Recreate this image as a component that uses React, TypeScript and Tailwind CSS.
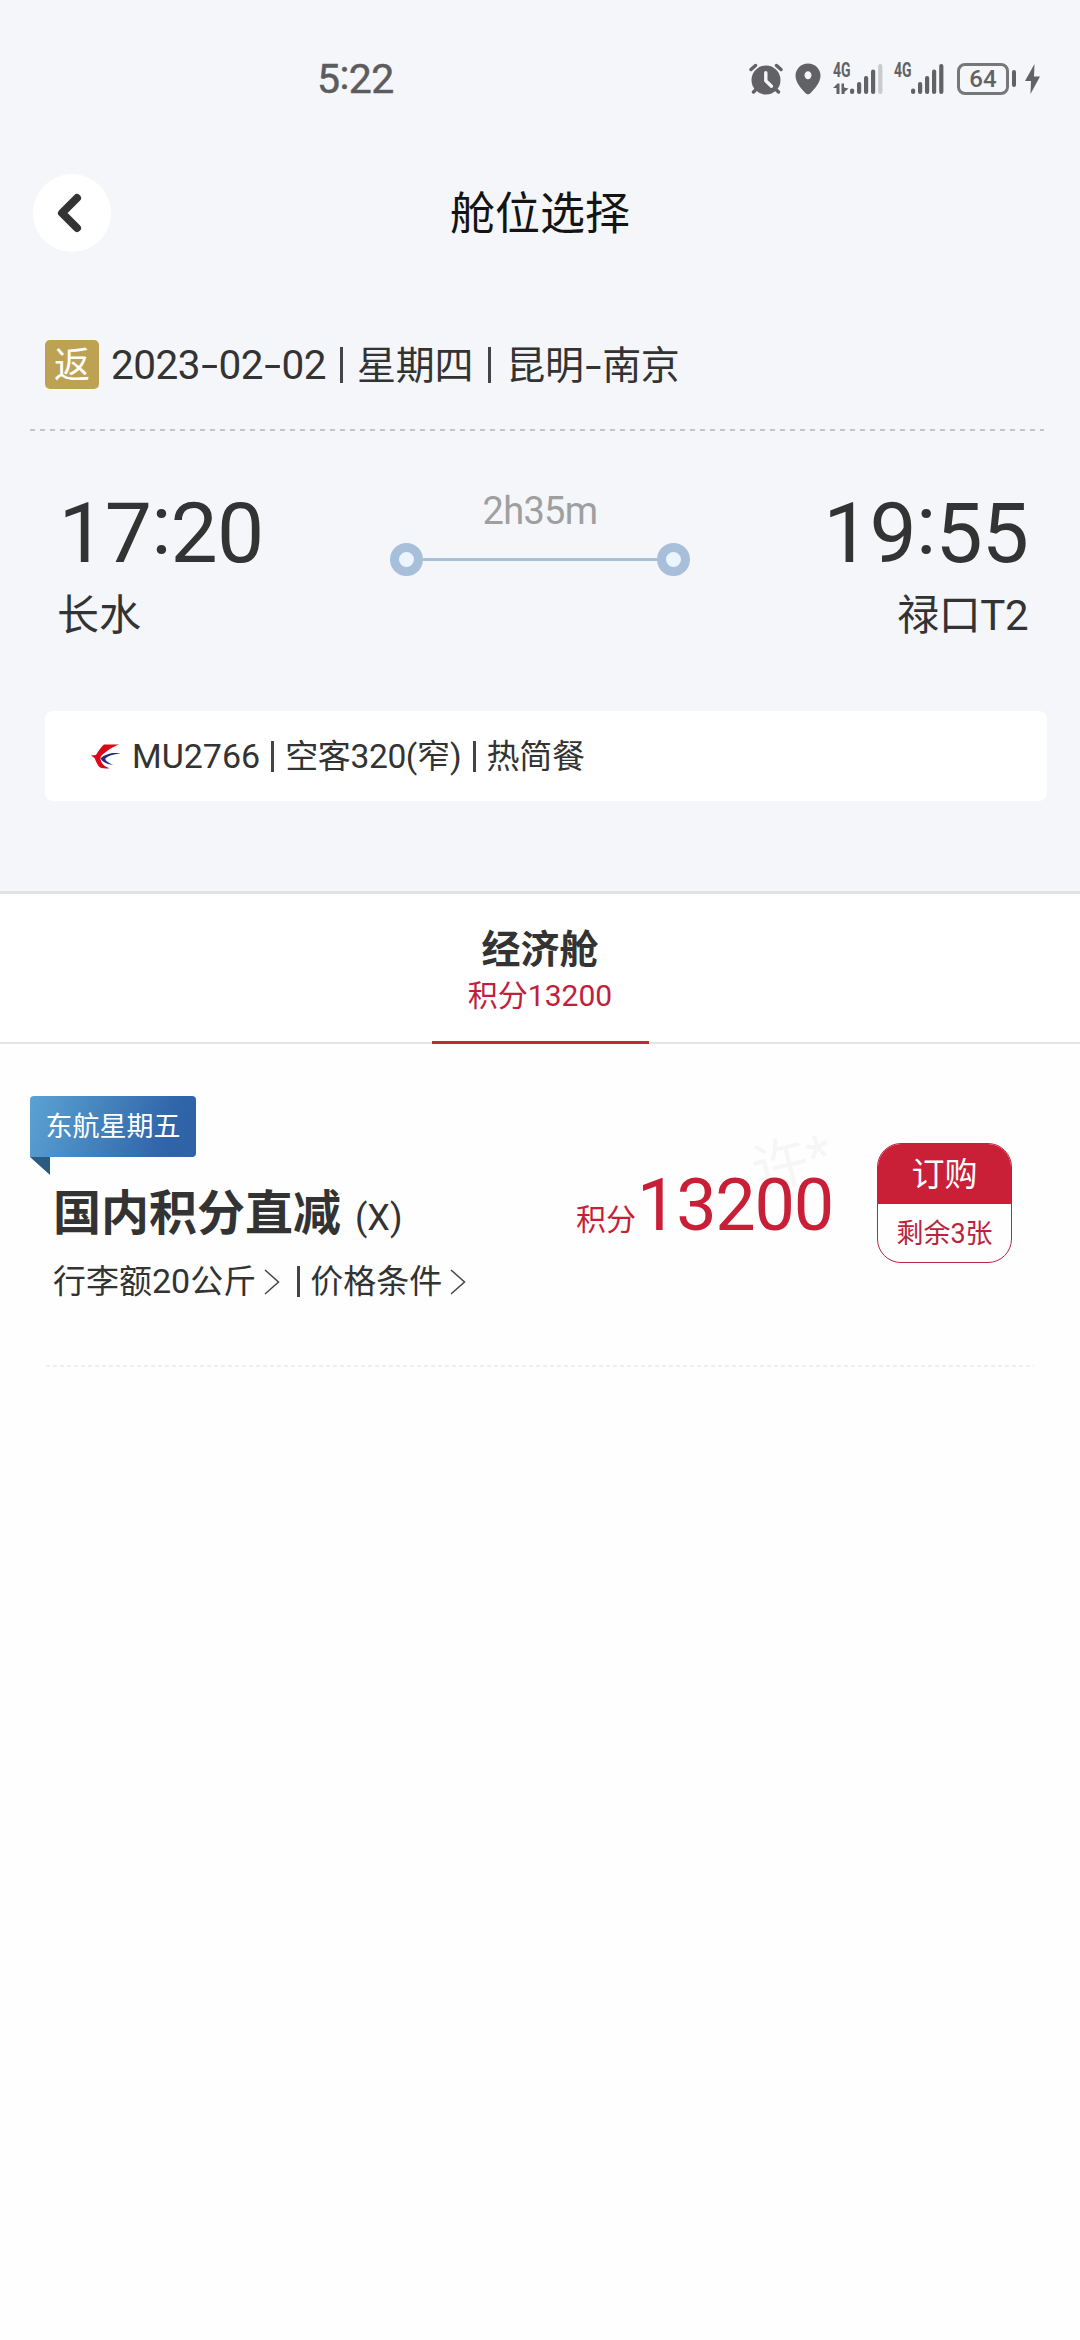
import React from "react";

function AlarmIcon() {
  return (
    <svg className="h-[32px] w-[34px]" viewBox="0 0 34 32" fill="#626265">
      <circle cx="17" cy="17" r="14.5" />
      <path d="M2 6.5 L6.5 2.5 M32 6.5 L27.5 2.5" stroke="#626265" strokeWidth="3.4" strokeLinecap="round" />
      <path d="M7.5 26 L4.5 29 M26.5 26 L29.5 29" stroke="#626265" strokeWidth="3.4" strokeLinecap="round" />
      <path d="M16.8 9.8 V17.8 L22.5 23.2" fill="none" stroke="#f4f6fa" strokeWidth="3.4" strokeLinecap="round" strokeLinejoin="round" />
    </svg>
  );
}

function PinIcon() {
  return (
    <svg className="h-[32px] w-[26px]" viewBox="0 0 26 32" fill="#626265" fillRule="evenodd">
      <path d="M13 .5C6 .5.5 6 .5 12.8c0 7 6 13.2 10.4 17.8q2.1 1.6 4.2 0C19.5 26 25.5 19.8 25.5 12.8 25.5 6 20 .5 13 .5ZM13 8.300c2 0 3.500 1.700 3.500 4s-1.500 4-3.500 4-3.500-1.700-3.500-4 1.500-4 3.500-4Z" />
    </svg>
  );
}

function Signal({ weak }: { weak?: boolean }) {
  return (
    <svg className="h-[38px] w-[51px]" viewBox="0 -3 51 38" fill="#626265">
      <text x="0" y="13.6" fontFamily="Roboto" fontSize="19.5" fontWeight="700" textLength="17.5" lengthAdjust="spacingAndGlyphs">4G</text>
      {weak && (
        <path d="M0 25 4.500 20.500H6.500V31H3.500V25ZM8.500 20.500H11V24.500L15.500 25.500 11.500 29V31H8.500Z" />
      )}
      <rect x="17" y="25.500" width="4.200" height="5.500" rx="2" />
      <rect x="24" y="19" width="4.200" height="12" rx="2" />
      <rect x="31" y="13" width="4.200" height="18" rx="2" />
      <rect x="38" y="6.500" width="4.200" height="24.500" rx="2" />
      <rect x="45.200" y="1" width="4.200" height="30" rx="2" fill={weak ? "#c9cacd" : "#626265"} />
    </svg>
  );
}

function StatusBar() {
  return (
    <div className="flex h-[157px] items-center pl-[317px]">
      <div className="w-[432px] pt-[2px] text-[41px] leading-[41px] tracking-[-0.6px] text-[#5c5c5f] [-webkit-text-stroke:0.5px_#5c5c5f]">
        5<span className="inline-block -translate-y-[4px]">:</span>22
      </div>
      <div className="flex items-center">
        <AlarmIcon />
        <div className="ml-[12px]"><PinIcon /></div>
        <div className="ml-[12px]"><Signal weak /></div>
        <div className="ml-[10px]"><Signal /></div>
        <div className="ml-[12px] flex h-[32px] w-[52px] items-center justify-center rounded-[8px] border-[3px] border-[#77777a] text-[24px] leading-[26px] font-medium text-[#626265]">
          64
        </div>
        <div className="ml-[3px] h-[17px] w-[4px] rounded-full bg-[#626265]" />
        <svg className="ml-[9px] h-[30px] w-[15px]" viewBox="0 0 15 30" fill="#626265">
          <path d="M9.500 0 0 17H6L5.500 30 15 12.500H9Z" />
        </svg>
      </div>
    </div>
  );
}

function TitleBar() {
  return (
    <div className="grid grid-cols-[1fr_auto_1fr] items-center pt-[17px] pl-[33px] pr-[33px]">
      <div className="flex size-[78px] items-center justify-center rounded-full bg-white pr-[6px]">
        <svg className="h-[40px] w-[26px]" viewBox="0 0 26 40" fill="none" stroke="#333" strokeWidth="8" strokeLinecap="round" strokeLinejoin="round">
          <path d="M21 5 6 20 21 35" />
        </svg>
      </div>
      <h1 className="text-[45px] leading-[45px] text-[#141414] pt-[2px]">舱位选择</h1>
    </div>
  );
}

function Hyphen() {
  return <span className="inline-block w-[18.500px] scale-x-[1.500] text-center">-</span>;
}

function Bar({ className }: { className: string }) {
  return <span className={`inline-block w-[3px] bg-[#444] ${className}`} />;
}

function DateRow() {
  return (
    <div className="mt-[88px] flex h-[49px] items-center pl-[45px]">
      <div className="flex h-[49px] w-[54px] items-center justify-center rounded-[5px] bg-[#bda254] text-[36px] leading-[36px] text-white pt-[3px]">返</div>
      <div className="ml-[12px] flex items-baseline pb-[1px] text-[39px] leading-[40px] whitespace-nowrap">
        <span className="text-[40.500px] tracking-[-0.500px]">2023<Hyphen />02<Hyphen />02</span>
        <Bar className="ml-[14px] h-[36px] translate-y-[4px]" />
        <span className="ml-[14px] tracking-[-0.300px]">星期四</span>
        <Bar className="ml-[15px] h-[36px] translate-y-[4px]" />
        <span className="ml-[15px] tracking-[-0.300px]">昆明</span>
        <Hyphen />
        <span className="tracking-[-0.300px]">南京</span>
      </div>
    </div>
  );
}

function Clock({ h, m }: { h: string; m: string }) {
  return (
    <div className="text-[84px] leading-[84px] tracking-[-0.900px]">
      {h}<span className="inline-block -translate-y-[8px]">:</span>{m}
    </div>
  );
}

function Stop() {
  return <span className="size-[33px] rounded-full border-[9px] border-[#a8bfda] bg-[#eaf5ff]" />;
}

function Route() {
  return (
    <div className="flex justify-between pt-[61px] pr-[52px] pl-[57px]">
      <div className="w-[333px]">
        <div className="pl-[1.500px]"><Clock h="17" m="20" /></div>
        <div className="mt-[19px] text-[42px] leading-[42px]">长水</div>
      </div>
      <div className="w-[300px]">
        <div className="text-center text-[38px] leading-[38px] tracking-[-0.700px] text-[#9f9f9f]">2h35m</div>
        <div className="mt-[13px] flex items-center">
          <Stop />
          <span className="h-[3px] flex-1 bg-[#a8c0d6]" />
          <Stop />
        </div>
      </div>
      <div className="flex w-[338px] flex-col items-end">
        <Clock h="19" m="55" />
        <div className="mt-[19px] text-[42px] leading-[42px] tracking-[-0.500px]">禄口T2</div>
      </div>
    </div>
  );
}

function AirlineLogo() {
  return (
    <svg className="h-[25px] w-[30px]" viewBox="0 0 30 25">
      <path d="M0 11.500 5 11C8 6 10.500 2.500 13 .5H28C24 1.800 20 4 15.500 7.500 11 10.500 9 12.500 9.500 15.500 10.500 19.500 13 22.500 18.500 24.200 14 24.800 9.500 24.500 7.500 22 5.500 19 4.500 16 3.500 14Z" fill="#dc0617" />
      <path d="M29.500 9.500C22 8.200 14 10 9.500 14.500 11.500 18 16 20.500 22.500 20.800 17.500 19 14.500 17 14.200 14.800 17 11.800 22 10.300 29.500 9.500Z" fill="#252779" />
    </svg>
  );
}

function FlightInfo() {
  return (
    <div className="mt-[74px] mr-[33px] ml-[45px] flex h-[90px] items-center rounded-[8px] bg-white pl-[46px]">
      <AirlineLogo />
      <div className="ml-[11px] flex items-baseline pb-[1px] text-[33px] leading-[34px] whitespace-nowrap">
        <span className="text-[34px]">MU2766</span>
        <Bar className="ml-[11px] h-[31px] translate-y-[4px]" />
        <span className="ml-[11px] tracking-[-0.300px]">空客</span>
        <span className="text-[33.500px] tracking-[-0.400px]">320(</span>
        <span>窄</span>
        <span className="text-[33.500px]">)</span>
        <Bar className="ml-[11px] h-[31px] translate-y-[4px]" />
        <span className="ml-[11px] tracking-[-0.300px]">热简餐</span>
      </div>
    </div>
  );
}

function CabinTab() {
  return (
    <div className="flex h-[153px] flex-col items-center border-t-[3px] border-[#e2e2e2] bg-white">
      <div className="mt-[37px] text-[39px] leading-[39px] font-bold">经济舱</div>
      <div className="mt-[11px] text-[30px] leading-[30px] text-[#c1203c]">积分13200</div>
      <div className="mt-auto flex w-full items-end">
        <span className="h-[2px] flex-1 bg-[#e4e4e4]" />
        <span className="h-[3px] w-[217px] bg-[#c32a35]" />
        <span className="h-[2px] flex-1 bg-[#e4e4e4]" />
      </div>
    </div>
  );
}

function Chevron() {
  return (
    <svg className="h-[26px] w-[16px]" viewBox="0 0 16 26" fill="none" stroke="#444" strokeWidth="1.500">
      <path d="M1 1 14.500 13 1 25" />
    </svg>
  );
}

function FareCard() {
  return (
    <div className="flex h-[320px] pt-[52px]">
      <div className="w-[530px] pl-[30px]">
        <div className="flex h-[61px] w-[166px] items-center justify-center rounded-[4px] rounded-bl-none bg-linear-[110deg,#5ba3d3_0%,#3065a9_80%,#2f61a5_100%] pt-[2px] text-[27px] leading-[27px] whitespace-nowrap text-white">
          东航星期五
        </div>
        <svg className="block h-[18px] w-[20px]" viewBox="0 0 20 18">
          <path d="M0 0H20V18Z" fill="#2a5b81" />
        </svg>
        <div className="mt-[15px] flex items-baseline pl-[23px] leading-[48px] whitespace-nowrap">
          <span className="text-[48px] font-bold">国内积分直减</span>
          <span className="ml-[14px] text-[36px]">(X)</span>
        </div>
        <div className="mt-[22px] flex items-center pl-[23px] text-[33px] leading-[34px] whitespace-nowrap">
          <span>行李额<span className="text-[34px]">20</span>公斤</span>
          <span className="ml-[8px] flex"><Chevron /></span>
          <Bar className="ml-[17px] h-[31px]" />
          <span className="ml-[10px]">价格条件</span>
          <span className="ml-[8px] flex"><Chevron /></span>
        </div>
      </div>
      <div className="relative flex h-[72px] w-[347px] items-baseline pl-[46px] mt-[74px] text-[#c81e36]">
        <span className="pointer-events-none absolute top-[-35px] left-[222px] -rotate-[14deg] text-[56px] leading-[56px] text-[#f6f6f6]">许*</span>
        <span className="relative text-[30px] leading-[72px]">积分</span>
        <span className="relative ml-[1px] text-[72px] leading-[72px] tracking-[-1.300px]">13200</span>
      </div>
      <div className="mt-[47px] flex h-[120px] w-[135px] flex-col overflow-hidden rounded-[24px] border border-[#b8273f] text-center">
        <div className="h-[60px] bg-[#c91f37] pt-[14px] text-[33px] leading-[33px] text-white">订购</div>
        <div className="pt-[17px] text-[27px] leading-[27px] text-[#b9243d]">剩余3张</div>
      </div>
    </div>
  );
}

export default function App() {
  return (
    <div className="h-[2340px] w-[1080px] overflow-hidden bg-[#fefefe] font-[Roboto,'Noto_Sans_CJK_SC',sans-serif] text-[#333]">
      <header className="h-[891px] bg-[#f4f6fa]">
        <StatusBar />
        <TitleBar />
        <DateRow />
        <div className="mt-[40px] mr-[36px] ml-[30px] h-[2px] bg-[repeating-linear-gradient(90deg,#c3c4c6_0px,#c3c4c6_5px,transparent_5px,transparent_10px)]" />
        <Route />
        <FlightInfo />
      </header>
      <CabinTab />
      <FareCard />
      <div className="mt-[1px] mr-[46px] ml-[46px] h-[2px] bg-[repeating-linear-gradient(90deg,#efefef_0px,#efefef_4px,transparent_4px,transparent_7px)]" />
    </div>
  );
}
